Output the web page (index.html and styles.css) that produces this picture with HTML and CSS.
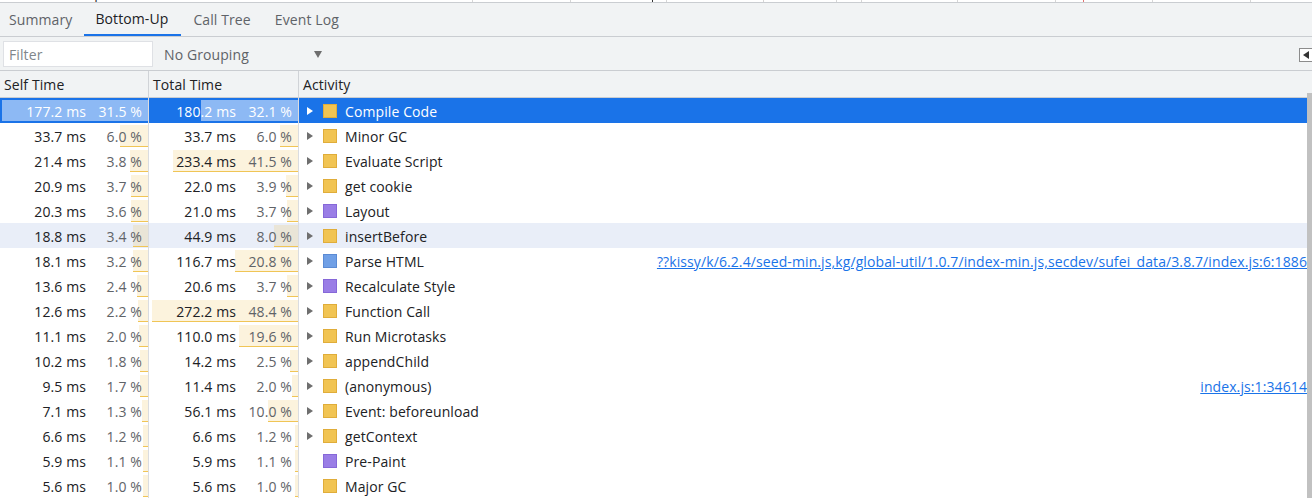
FILE: index.html
```html
<!DOCTYPE html>
<html>
<head>
<meta charset="utf-8">
<link rel="stylesheet" href="styles.css">
</head>
<body>
<div class="flame">
  <div class="flame-text"><span class="caret">▾</span> Main — https://www.taobao.com</div>
  <span class="tick" style="left:472px"></span>
  <span class="tick" style="left:570px"></span>
  <span class="tick dark" style="left:652px"></span>
  <span class="tick" style="left:666px"></span>
  <span class="tick" style="left:763px"></span>
  <span class="tick" style="left:836px"></span>
  <span class="tick" style="left:861px"></span>
  <span class="tick" style="left:957px"></span>
  <span class="tick" style="left:1055px"></span>
  <span class="tick red" style="left:1083px"></span>
  <span class="tick" style="left:1152px"></span>
  <span class="tick" style="left:1250px"></span>
</div>
<div class="tabs">
  <div class="tab first">Summary</div>
  <div class="tab active">Bottom-Up</div>
  <div class="tab">Call Tree</div>
  <div class="tab">Event Log</div>
</div>
<div class="toolbar">
  <div class="filter">Filter</div>
  <div class="grouping"><span>No Grouping</span><span class="dd"></span></div>
  <div class="sidebtn"><span class="tri-left"></span></div>
</div>
<div class="grid">
  <div class="head">
    <div class="hc c1">Self Time</div>
    <div class="hc c2">Total Time</div>
    <div class="hc c3">Activity</div>
  </div>
  <div class="body" id="body"></div>
  <div class="thumb"></div>
</div>
<script src="app.js"></script>
</body>
</html>
```
FILE: app.js
```js
var rows = [
  ["177.2","31.5","180.2","32.1","Compile Code","y",true,"",1],
  ["33.7","6.0","33.7","6.0","Minor GC","y",true,""],
  ["21.4","3.8","233.4","41.5","Evaluate Script","y",true,""],
  ["20.9","3.7","22.0","3.9","get cookie","y",true,""],
  ["20.3","3.6","21.0","3.7","Layout","p",true,""],
  ["18.8","3.4","44.9","8.0","insertBefore","y",true,"",2],
  ["18.1","3.2","116.7","20.8","Parse HTML","b",true,"??kissy/k/6.2.4/seed-min.js,kg/global-util/1.0.7/index-min.js,secdev/sufei_data/3.8.7/index.js:6:1886"],
  ["13.6","2.4","20.6","3.7","Recalculate Style","p",true,""],
  ["12.6","2.2","272.2","48.4","Function Call","y",true,""],
  ["11.1","2.0","110.0","19.6","Run Microtasks","y",true,""],
  ["10.2","1.8","14.2","2.5","appendChild","y",true,""],
  ["9.5","1.7","11.4","2.0","(anonymous)","y",true,"index.js:1:34614"],
  ["7.1","1.3","56.1","10.0","Event: beforeunload","y",true,""],
  ["6.6","1.2","6.6","1.2","getContext","y",true,""],
  ["5.9","1.1","5.9","1.1","Pre-Paint","p",false,""],
  ["5.6","1.0","5.6","1.0","Major GC","y",false,""]
];
var body = document.getElementById("body");
var html = "";
rows.forEach(function (r) {
  var cls = "row";
  if (r[8] === 1) cls += " selected";
  if (r[8] === 2) cls += " hover";
  var sw = (parseFloat(r[0]) / 177.2 * 146).toFixed(1);
  var tw = (parseFloat(r[2]) / 272.2 * 146).toFixed(1);
  html += '<div class="' + cls + '">' +
    '<div class="cell c1"><span class="bar" style="width:' + sw + 'px"></span><span class="ms">' + r[0] + ' ms</span><span class="pct">' + r[1] + ' %</span></div>' +
    '<div class="cell c2"><span class="bar" style="width:' + tw + 'px"></span><span class="ms">' + r[2] + ' ms</span><span class="pct">' + r[3] + ' %</span></div>' +
    '<div class="cell c3"><span class="exp' + (r[6] ? '' : ' none') + '"></span><span class="sq ' + r[5] + '"></span><span class="name">' + r[4] + '</span>' +
    (r[7] ? '<span class="link">' + r[7] + '</span>' : '') + '</div>' +
    '</div>';
});
body.innerHTML = html;
```
FILE: styles.css
```css
html, body {
  margin: 0;
  padding: 0;
  background: #ffffff;
  overflow: hidden;
  width: 1312px;
  height: 498px;
}
body {
  font-family: "Open Sans", "Noto Sans", sans-serif;
  font-size: 14px;
  letter-spacing: 0.1px;
  color: #202124;
}
.flame {
  position: relative;
  height: 2px;
  background: #ffffff;
  border-bottom: 1px solid #cacdd1;
  overflow: hidden;
}
.flame-text {
  margin-top: -14px;
  padding-left: 10px;
  line-height: 16px;
  color: #303030;
  white-space: nowrap;
}
.tick {
  position: absolute;
  top: 0;
  width: 1px;
  height: 2px;
  background: #d6d6d6;
}
.tick.dark { background: #333; }
.tick.red { background: #e07070; }
.tabs {
  display: flex;
  height: 33px;
  background: #f1f3f4;
  border-bottom: 1px solid #cacdd1;
}
.tab {
  padding: 1px 12px 0;
  line-height: 32px;
  color: #5f6368;
  white-space: nowrap;
  box-sizing: border-box;
  height: 33px;
}
.tab.first { padding-left: 9px; }
.tab.active {
  color: #202124;
  border-bottom: 2px solid #1a73e8;
  line-height: 30px;
  padding-left: 11px;
  padding-right: 13px;
}
.toolbar {
  display: flex;
  align-items: center;
  height: 33px;
  background: #f1f3f4;
  border-bottom: 1px solid #cacdd1;
  padding-left: 3px;
}
.filter {
  box-sizing: border-box;
  width: 150px;
  height: 26px;
  background: #fff;
  border: 1px solid #dfe1e5;
  padding-left: 5px;
  padding-top: 1px;
  line-height: 23px;
  color: #80868b;
}
.grouping {
  display: flex;
  align-items: center;
  width: 158px;
  margin-left: 11px;
  padding-top: 1px;
  color: #5f6368;
}
.grouping .dd {
  margin-left: auto;
  width: 0;
  height: 0;
  border-left: 4.5px solid transparent;
  border-right: 4.5px solid transparent;
  border-top: 7px solid #6e6e6e;
}
.sidebtn {
  margin-left: auto;
  margin-right: -2px;
  margin-top: 3px;
  box-sizing: border-box;
  width: 15px;
  height: 14px;
  border: 1px solid #8c8c8c;
  background: #fff;
  display: flex;
  align-items: center;
  padding-left: 3px;
}
.tri-left {
  width: 0;
  height: 0;
  border-top: 4px solid transparent;
  border-bottom: 4px solid transparent;
  border-right: 6px solid #333;
}
.grid {
  position: relative;
}
.head {
  display: grid;
  grid-template-columns: 149px 150px 1fr;
  height: 26px;
  background: #f1f3f4;
  border-bottom: 1px solid #cacdd1;
}
.hc {
  line-height: 26px;
  padding-top: 1px;
  padding-left: 4px;
  white-space: nowrap;
}
.hc.c1, .hc.c2 { border-right: 1px solid #d0d3d7; }
.body {
  padding-right: 5px;
}
.row {
  display: grid;
  grid-template-columns: 149px 150px 1fr;
  height: 25px;
}
.row.hover { background: #e9eef8; }
.row.selected { background: #1a73e8; color: #fff; }
.cell {
  position: relative;
  display: flex;
  align-items: center;
  white-space: nowrap;
  overflow: hidden;
}
.cell.c1, .cell.c2 {
  justify-content: flex-end;
  border-right: 1px solid #dadce0;
  padding-right: 6px;
}
.bar {
  position: absolute;
  right: 0;
  top: 2px;
  bottom: 1px;
  background: rgba(240, 197, 86, 0.2);
  border-bottom: 1px solid #f0c556;
}
.row.selected .bar {
  background: rgba(255, 255, 255, 0.5);
  border-bottom: none;
  bottom: 2px;
}
.ms, .pct, .name, .link {
  position: relative;
  padding-top: 2px;
}
.pct {
  width: 56px;
  text-align: right;
  color: #5f6368;
}
.row.selected .pct { color: #fff; }
.cell.c3 {
  padding-left: 8px;
}
.exp {
  width: 0;
  height: 0;
  border-top: 4px solid transparent;
  border-bottom: 4px solid transparent;
  border-left: 6px solid #6e6e6e;
  flex-shrink: 0;
}
.exp.none { border-left-color: transparent; }
.row.selected .exp { border-left-color: #fff; }
.sq {
  box-sizing: border-box;
  width: 14px;
  height: 14px;
  margin-left: 10px;
  margin-right: 8px;
  flex-shrink: 0;
}
.sq.y { background: #f1c453; border: 1px solid #e0ad3a; }
.sq.p { background: #9a7ee6; border: 1px solid #8668d8; }
.sq.b { background: #70a0e6; border: 1px solid #5b8bd4; }
.name { flex-shrink: 0; }
.link {
  margin-left: auto;
  color: #1a73e8;
  text-decoration: underline;
}
.thumb {
  position: absolute;
  right: 0;
  top: 22px;
  height: 410px;
  width: 5px;
  background: #c1c1c1;
}
```
